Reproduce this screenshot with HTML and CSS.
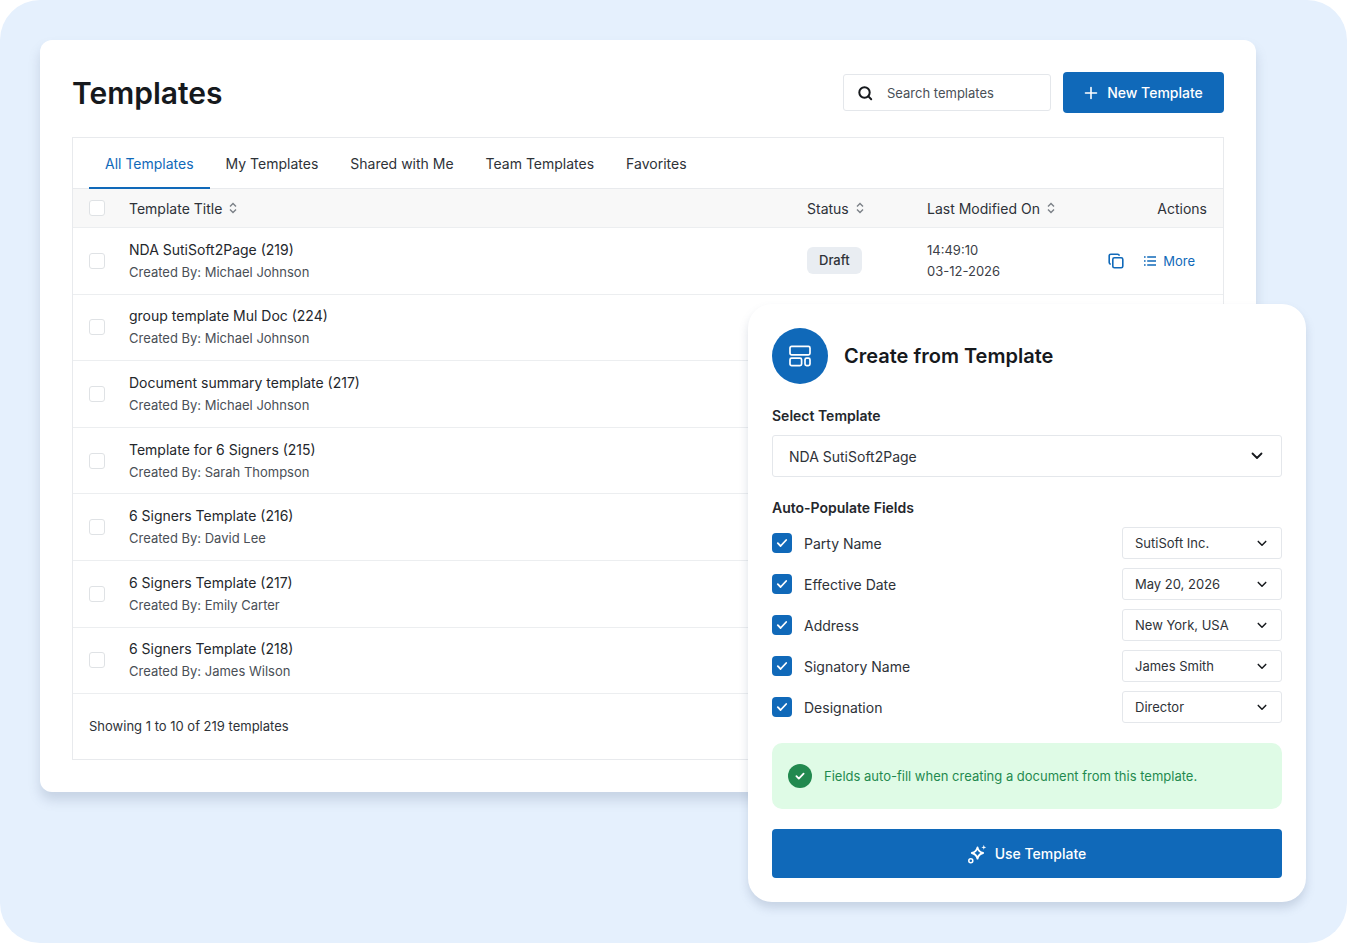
FILE: index.html
```html
<!DOCTYPE html>
<html>
<head>
<meta charset="utf-8">
<title>Templates</title>
<link rel="stylesheet" href="styles.css">
</head>
<body>
<div class="stage">
    <div class="card">
        <div class="top">
            <h1>Templates</h1>
            <div class="search">
                <svg width="16" height="16" viewBox="0 0 16 16" fill="none" stroke="#16191d" stroke-width="2" stroke-linecap="round"><circle cx="7.5" cy="7.5" r="5.2"/><path d="M11.4 11.4l2.8 2.8"/></svg>
                <span>Search templates</span>
            </div>
            <div class="new-btn">
                <svg width="14" height="14" viewBox="0 0 14 14" fill="none" stroke="#fff" stroke-width="1.6" stroke-linecap="round"><path d="M7 1.5v11M1.5 7h11"/></svg>
                <span>New Template</span>
            </div>
        </div>
        <div class="panel">
            <div class="tabs">
                <div class="tab active">All Templates</div>
                <div class="tab">My Templates</div>
                <div class="tab">Shared with Me</div>
                <div class="tab">Team Templates</div>
                <div class="tab">Favorites</div>
            </div>
            <div class="row head">
                <div class="box"></div>
                <div class="sort">Template Title <svg class="updown" width="8" height="12" viewBox="0 0 8 12"><path d="M1 4.4L4 1.4l3 3M1 7.6l3 3 3-3"/></svg></div>
                <div class="sort">Status <svg class="updown" width="8" height="12" viewBox="0 0 8 12"><path d="M1 4.4L4 1.4l3 3M1 7.6l3 3 3-3"/></svg></div>
                <div class="sort">Last Modified On <svg class="updown" width="8" height="12" viewBox="0 0 8 12"><path d="M1 4.4L4 1.4l3 3M1 7.6l3 3 3-3"/></svg></div>
                <div class="actions-head">Actions</div>
            </div>
            <div class="row item">
                <div class="box"></div>
                <div><div class="name">NDA SutiSoft2Page (219)</div><div class="by">Created By: Michael Johnson</div></div>
                <div><span class="badge">Draft</span></div>
                <div class="stamp">14:49:10<br>03-12-2026</div>
                <div class="actions">
                    <svg width="16" height="16" viewBox="0 0 16 16" fill="none" stroke="#1069b9" stroke-width="1.6" stroke-linejoin="round"><rect x="4.8" y="4.8" width="10" height="10" rx="1.6"/><path d="M2.8 11.2A1.6 1.6 0 0 1 1.2 9.6V2.8a1.6 1.6 0 0 1 1.6-1.6h6.8a1.6 1.6 0 0 1 1.6 1.6"/></svg>
                    <span class="more">
                        <svg width="12" height="10" viewBox="0 0 12 10" fill="none" stroke="#1069b9" stroke-width="1.6"><path d="M0 1h1.6M3.2 1H12M0 5h1.6M3.2 5H12M0 9h1.6M3.2 9H12"/></svg>
                        More
                    </span>
                </div>
            </div>
            <div class="row item"><div class="box"></div><div><div class="name">group template Mul Doc (224)</div><div class="by">Created By: Michael Johnson</div></div></div>
            <div class="row item"><div class="box"></div><div><div class="name">Document summary template (217)</div><div class="by">Created By: Michael Johnson</div></div></div>
            <div class="row item"><div class="box"></div><div><div class="name">Template for 6 Signers (215)</div><div class="by">Created By: Sarah Thompson</div></div></div>
            <div class="row item"><div class="box"></div><div><div class="name">6 Signers Template (216)</div><div class="by">Created By: David Lee</div></div></div>
            <div class="row item"><div class="box"></div><div><div class="name">6 Signers Template (217)</div><div class="by">Created By: Emily Carter</div></div></div>
            <div class="row item"><div class="box"></div><div><div class="name">6 Signers Template (218)</div><div class="by">Created By: James Wilson</div></div></div>
            <div class="foot">Showing 1 to 10 of 219 templates</div>
        </div>
    </div>

    <div class="popup">
        <div class="pop-head">
            <div class="pop-icon">
                <svg width="24" height="24" viewBox="0 0 24 24" fill="none" stroke="#fff" stroke-width="1.7" stroke-linejoin="round"><rect x="2" y="2.4" width="20" height="8.4" rx="1.6"/><rect x="2" y="14.2" width="11.6" height="7.4" rx="1.6"/><rect x="17" y="14.2" width="5" height="7.4" rx="1.6"/></svg>
            </div>
            <h2>Create from Template</h2>
        </div>
        <div class="label">Select Template</div>
        <div class="select big">
            <span>NDA SutiSoft2Page</span>
            <svg class="chev" width="12" height="8" viewBox="0 0 12 8"><path d="M1.5 1.5L6 6l4.5-4.5"/></svg>
        </div>
        <div class="label second">Auto-Populate Fields</div>
        <div class="fields">
            <div class="field">
                <div class="tick"><svg width="12" height="10" viewBox="0 0 12 10"><path d="M1.8 5.2l2.8 2.8 5.6-6"/></svg></div>
                <div class="field-name">Party Name</div>
                <div class="select"><span>SutiSoft Inc.</span><svg class="chev" width="10" height="7" viewBox="0 0 12 8"><path d="M1.5 1.5L6 6l4.5-4.5"/></svg></div>
            </div>
            <div class="field">
                <div class="tick"><svg width="12" height="10" viewBox="0 0 12 10"><path d="M1.8 5.2l2.8 2.8 5.6-6"/></svg></div>
                <div class="field-name">Effective Date</div>
                <div class="select"><span>May 20, 2026</span><svg class="chev" width="10" height="7" viewBox="0 0 12 8"><path d="M1.5 1.5L6 6l4.5-4.5"/></svg></div>
            </div>
            <div class="field">
                <div class="tick"><svg width="12" height="10" viewBox="0 0 12 10"><path d="M1.8 5.2l2.8 2.8 5.6-6"/></svg></div>
                <div class="field-name">Address</div>
                <div class="select"><span>New York, USA</span><svg class="chev" width="10" height="7" viewBox="0 0 12 8"><path d="M1.5 1.5L6 6l4.5-4.5"/></svg></div>
            </div>
            <div class="field">
                <div class="tick"><svg width="12" height="10" viewBox="0 0 12 10"><path d="M1.8 5.2l2.8 2.8 5.6-6"/></svg></div>
                <div class="field-name">Signatory Name</div>
                <div class="select"><span>James Smith</span><svg class="chev" width="10" height="7" viewBox="0 0 12 8"><path d="M1.5 1.5L6 6l4.5-4.5"/></svg></div>
            </div>
            <div class="field">
                <div class="tick"><svg width="12" height="10" viewBox="0 0 12 10"><path d="M1.8 5.2l2.8 2.8 5.6-6"/></svg></div>
                <div class="field-name">Designation</div>
                <div class="select"><span>Director</span><svg class="chev" width="10" height="7" viewBox="0 0 12 8"><path d="M1.5 1.5L6 6l4.5-4.5"/></svg></div>
            </div>
        </div>
        <div class="notice">
            <div class="notice-icon"><svg width="12" height="10" viewBox="0 0 12 10"><path d="M2.4 5.2l2.4 2.4 4.8-5"/></svg></div>
            <span>Fields auto-fill when creating a document from this template.</span>
        </div>
        <div class="use-btn">
            <svg width="20" height="20" viewBox="0 0 20 20" fill="#fff"><path d="M9.5 3.4c.7 3.4 2.1 4.9 5.6 5.6-3.5.8-4.9 2.2-5.6 5.7-.8-3.5-2.200-4.900-5.700-5.700 3.500-.7 4.900-2.200 5.700-5.600z" fill="none" stroke="#fff" stroke-width="1.8" stroke-linejoin="round"/><path d="M15.800.8l.6 1.900 1.900.6-1.900.6-.6 1.900-.6-1.900-1.900-.6 1.900-.6z"/><circle cx="2.800" cy="16.800" r="2" fill="none" stroke="#fff" stroke-width="1.500"/></svg>
            <span>Use Template</span>
        </div>
    </div>
</div>
</body>
</html>
```

FILE: styles.css
```css
html, body {
    margin: 0;
    background: #fff;
}
body {
    font-family: Inter, "Liberation Sans", sans-serif;
    color: #2e3238;
    font-size: 14px;
}
.stage {
    position: relative;
    box-sizing: border-box;
    width: 1347px;
    height: 943px;
    padding: 40px 91px 151px 40px;
    background: #e5f0fd;
    border-radius: 40px;
    overflow: hidden;
}
.card {
    box-sizing: border-box;
    height: 752px;
    padding: 32px;
    background: #fff;
    border-radius: 12px;
    box-shadow: 0 8px 12px rgba(90, 110, 140, 0.22);
}
.top {
    display: flex;
    align-items: center;
    height: 41px;
    margin-bottom: 24px;
}
h1 {
    flex: 1;
    margin: 0;
    font-size: 30px;
    font-weight: 600;
    color: #16191d;
}
.search {
    display: flex;
    align-items: center;
    gap: 14px;
    box-sizing: border-box;
    width: 208px;
    height: 37px;
    margin-right: 12px;
    padding-left: 13px;
    border: 1px solid #e4e7eb;
    border-radius: 3px;
    font-size: 13px;
    color: #4a4f56;
}
.new-btn {
    display: flex;
    align-items: center;
    justify-content: center;
    gap: 9px;
    width: 161px;
    height: 41px;
    background: #1069b9;
    border-radius: 4px;
    color: #fff;
    font-weight: 500;
}
.panel {
    border: 1px solid #e8eaed;
}
.tabs {
    display: flex;
    height: 50px;
    padding-left: 16px;
    border-bottom: 1px solid #e8eaed;
}
.tab {
    display: flex;
    align-items: center;
    padding: 0 16px;
    color: #2e3238;
    margin-bottom: -1px;
}
.tab.active {
    color: #1069b9;
    box-shadow: inset 0 -2px 0 #1069b9;
}
.row {
    display: grid;
    grid-template-columns: 40px 678px 120px 1fr auto;
    align-items: center;
    padding: 0 16px;
    border-bottom: 1px solid #eceef0;
    box-sizing: border-box;
}
.head {
    height: 39px;
    background: #f8f8f8;
}
.item {
    height: 66.6px;
}
.box {
    box-sizing: border-box;
    width: 16px;
    height: 16px;
    border: 1.5px solid #dfe2e5;
    border-radius: 3px;
    background: #fff;
}
.sort {
    display: flex;
    align-items: center;
    gap: 7px;
}
.updown path {
    fill: none;
    stroke: #7b8087;
    stroke-width: 1.4;
}
.name {
    line-height: 20px;
    color: #24272c;
}
.by {
    margin-top: 2px;
    font-size: 13px;
    line-height: 20px;
    color: #4a4f56;
}
.badge {
    display: inline-block;
    padding: 0 12px;
    height: 27px;
    line-height: 27px;
    background: #e9edf2;
    border-radius: 6px;
    font-size: 13px;
    font-weight: 500;
}
.stamp {
    font-size: 13px;
    line-height: 21px;
    color: #3c4047;
}
.actions {
    display: flex;
    align-items: center;
    gap: 20px;
    padding-right: 12px;
}
.more {
    display: flex;
    align-items: center;
    gap: 7px;
    font-size: 13px;
    color: #1069b9;
}
.foot {
    padding: 0 16px;
    height: 65px;
    line-height: 65px;
    font-size: 13px;
}
.popup {
    position: absolute;
    left: 748px;
    top: 304px;
    box-sizing: border-box;
    width: 558px;
    height: 598px;
    padding: 24px;
    background: #fff;
    border-radius: 24px;
    box-shadow: 0 6px 10px rgba(90, 110, 140, 0.22);
}
.pop-head {
    display: flex;
    align-items: center;
    gap: 16px;
    margin-bottom: 22px;
}
.pop-icon {
    display: flex;
    align-items: center;
    justify-content: center;
    width: 56px;
    height: 56px;
    border-radius: 50%;
    background: #1069b9;
}
h2 {
    margin: 0;
    font-size: 20px;
    font-weight: 600;
    color: #16191d;
}
.label {
    font-weight: 600;
    line-height: 20px;
    color: #24272c;
    margin-bottom: 9px;
}
.label.second {
    margin-top: 21px;
}
.select {
    display: flex;
    align-items: center;
    justify-content: space-between;
    box-sizing: border-box;
    width: 160px;
    height: 32px;
    padding: 0 14px 0 12px;
    border: 1px solid #e4e7eb;
    border-radius: 3px;
    font-size: 13px;
}
.select.big {
    width: 100%;
    height: 42px;
    padding: 0 18px 0 16px;
    font-size: 14px;
}
.chev path {
    fill: none;
    stroke: #16191d;
    stroke-width: 1.8;
    stroke-linecap: round;
    stroke-linejoin: round;
}
.fields {
    display: flex;
    flex-direction: column;
    gap: 9px;
}
.field {
    display: flex;
    align-items: center;
}
.tick {
    display: flex;
    align-items: center;
    justify-content: center;
    width: 20px;
    height: 20px;
    margin-right: 12px;
    border-radius: 4px;
    background: #1069b9;
}
.tick path, .notice-icon path {
    fill: none;
    stroke: #fff;
    stroke-width: 1.8;
    stroke-linecap: round;
    stroke-linejoin: round;
}
.field-name {
    flex: 1;
}
.notice {
    display: flex;
    align-items: center;
    gap: 12px;
    height: 66px;
    margin-top: 20px;
    padding: 0 16px;
    background: #dffbe6;
    border-radius: 10px;
    font-size: 13px;
    color: #1f8a4f;
}
.notice-icon {
    display: flex;
    align-items: center;
    justify-content: center;
    width: 24px;
    height: 24px;
    border-radius: 50%;
    background: #22894f;
}
.use-btn {
    display: flex;
    align-items: center;
    justify-content: center;
    gap: 7px;
    height: 49px;
    margin-top: 20px;
    background: #1069b9;
    border-radius: 4px;
    color: #fff;
    font-weight: 500;
}
```
